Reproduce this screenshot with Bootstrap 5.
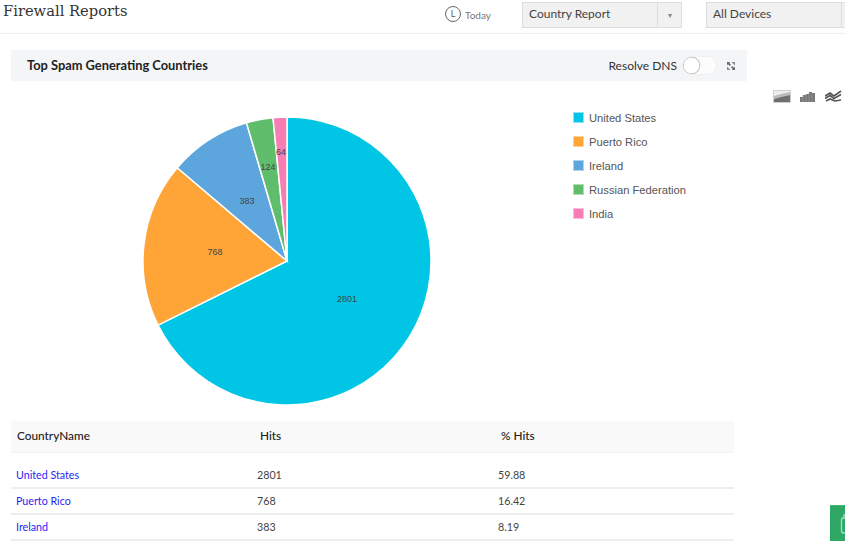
<!DOCTYPE html>
<html lang="en">
<head>
<meta charset="utf-8">
<title>Firewall Reports</title>
<link href="https://cdn.jsdelivr.net/npm/bootstrap@5.3.0/dist/css/bootstrap.min.css" rel="stylesheet">
<style>
html,body{height:100%;overflow:hidden;background:#fff}
body{font-family:Lato,"Liberation Sans",sans-serif;color:#333;font-size:12px}
.top-bar{height:34px;border-bottom:1px solid #eee;width:845px;overflow:hidden}
.page-title{font-family:"DejaVu Serif",serif;font-size:14.7px;font-weight:400;color:#333;margin:0 0 0 3px;width:442px;line-height:22px;height:24px;flex:none}
.today-box{width:77px;flex:none;padding-top:6px;color:#777;font-size:10px}
.clock-ring{width:16px;height:16px;border:1px solid #666;border-radius:50%;font-size:9px;line-height:14px;text-align:center;color:#555}
.today-word{margin-left:4px;line-height:18px}
.drop-group{width:160px;height:26px;margin-top:2px;flex:none}
.drop-group .btn{background:#f1f1f1;border:1px solid #ddd;border-radius:0;font-size:12px;color:#444;padding:0 6px 2px;text-align:left;line-height:20px}
.drop-group .drop-caret{width:25px;flex:none;padding:0;text-align:center;font-size:8px;color:#888}
.gap-drop{margin-left:24px}
.report-col{width:736px;margin-left:11px;flex:none}
.panel-bar{height:31px;background:#f4f5f7;margin-top:16px;padding:0 12px 0 16px}
.panel-name{font-size:12.85px;font-weight:700;color:#222}
.dns-label{font-size:12px;color:#333;margin-right:5px}
.form-switch .dns-toggle{width:35px;height:19px;margin:0;background-color:#fcfcfc;border-color:#f0f0f0;background-image:radial-gradient(circle at 8.500px 8.500px,#fff 0 7.500px,#ccc 8px 8.700px,transparent 9.200px);box-shadow:none}
.dns-wrap{padding:0;min-height:0;margin:0 10px 0 0}
.chart-art{display:block;width:736px;height:340px}
.legend-text{font-family:"Liberation Sans",sans-serif;font-size:11.2px;fill:#555}
.slice-text{font-family:"Liberation Sans",sans-serif;font-size:9px;fill:#444;text-anchor:middle}
.hits-table{width:723px;table-layout:fixed;margin:0}
.hits-table th{background:#f9f9f9;font-size:11.8px;font-weight:500;color:#222;height:31px;padding:0 0 0 8px;vertical-align:middle;border-bottom:1px solid #f2f2f2}
.hits-table th:first-child{padding-left:6px}
.hits-table td{height:26px;padding:1px 0 0 5px;vertical-align:middle;font-size:10.7px;color:#444;border-bottom:2px solid #eee}
.hits-table tr.first-row td{height:36px;padding-top:11px}
.hits-table a{color:#2525f5;text-decoration:none}
.view-icons{gap:9px;margin:56px 0 0 26px}
.float-tab{position:fixed;left:830px;top:505px;width:15px;height:36px;background:#2fa866;border-top:1px solid #3cb877;overflow:hidden}
.float-tab svg{display:block}
</style>
</head>
<body>
<header class="top-bar d-flex align-items-start">
  <h1 class="page-title">Firewall Reports</h1>
  <div class="today-box d-flex align-items-start"><span class="clock-ring">L</span><span class="today-word">Today</span></div>
  <div class="btn-group drop-group"><button class="btn" type="button">Country Report</button><button class="btn drop-caret" type="button">▾</button></div>
  <div class="btn-group drop-group gap-drop"><button class="btn" type="button">All Devices</button><button class="btn drop-caret" type="button" aria-label="Open"></button></div>
</header>
<div class="d-flex">
  <main class="report-col">
    <div class="panel-bar d-flex align-items-center justify-content-between">
      <span class="panel-name">Top Spam Generating Countries</span>
      <div class="d-flex align-items-center">
        <span class="dns-label">Resolve DNS</span>
        <div class="form-check form-switch dns-wrap"><input class="form-check-input dns-toggle" type="checkbox" role="switch" aria-label="Resolve DNS"></div>
        <svg width="8" height="8" viewBox="0 0 8 8"><path d="M0 0h3.200L2.200 1 4 2.800 2.800 4 1 2.200 0 3.200zM8 8H4.800l1-1L4 5.200 5.200 4 7 5.800l1-1z" fill="#666"/><path d="M4.500 0H8v3.500zM0 4.500V8h3.500z" fill="#8a8a8a"/></svg>
      </div>
    </div>
    <svg class="chart-art" viewBox="0 0 736 340" role="img" aria-label="Pie chart of top spam generating countries">
      <g transform="translate(-11 -81)" stroke="#fff" stroke-width="1.5">
        <path d="M287 261V117A144 144 0 1 1 158.060 325.100Z" fill="#00c5e5"/>
        <path d="M287 261L158.060 325.100A144 144 0 0 1 177.270 167.750Z" fill="#ffa437"/>
        <path d="M287 261L177.270 167.750A144 144 0 0 1 246.460 122.820Z" fill="#5ca6dd"/>
        <path d="M287 261L246.460 122.820A144 144 0 0 1 273.030 117.680Z" fill="#5fbd6c"/>
        <path d="M287 261L273.030 117.680A144 144 0 0 1 287 117Z" fill="#f77eb4"/>
      </g>
      <g transform="translate(-11 -81)">
        <text class="slice-text" x="347" y="302">2801</text>
        <text class="slice-text" x="215" y="255">768</text>
        <text class="slice-text" x="247" y="204">383</text>
        <text class="slice-text" x="268" y="170">124</text>
        <text class="slice-text" x="281" y="155">64</text>
        <rect x="573.500" y="112.500" width="10" height="10" fill="#00c5e5" stroke="#8fe3f2"/><text class="legend-text" x="589" y="122">United States</text>
        <rect x="573.500" y="136.500" width="10" height="10" fill="#ffa437" stroke="#ffd29b"/><text class="legend-text" x="589" y="146">Puerto Rico</text>
        <rect x="573.500" y="160.500" width="10" height="10" fill="#5ca6dd" stroke="#add2ee"/><text class="legend-text" x="589" y="170">Ireland</text>
        <rect x="573.500" y="184.500" width="10" height="10" fill="#5fbd6c" stroke="#afdeb5"/><text class="legend-text" x="589" y="194">Russian Federation</text>
        <rect x="573.500" y="208.500" width="10" height="10" fill="#f77eb4" stroke="#fbbed9"/><text class="legend-text" x="589" y="218">India</text>
      </g>
    </svg>
    <table class="table hits-table">
      <thead><tr><th>CountryName</th><th>Hits</th><th>% Hits</th></tr></thead>
      <tbody>
        <tr class="first-row"><td><a href="#">United States</a></td><td>2801</td><td>59.88</td></tr>
        <tr><td><a href="#">Puerto Rico</a></td><td>768</td><td>16.42</td></tr>
        <tr><td><a href="#">Ireland</a></td><td>383</td><td>8.19</td></tr>
      </tbody>
    </table>
  </main>
  <aside class="view-icons d-flex align-items-start">
    <svg width="18" height="13" viewBox="0 0 18 13"><rect width="18" height="13" fill="#cfcfcf"/><rect x="1" y="1" width="16" height="11" fill="#eee"/><path d="M1 6l7-2 9-2v3L8 7 1 9z" fill="#bbb"/><path d="M1 9l7-2 9-2v7H1z" fill="#6f6f6f"/></svg>
    <svg width="16" height="13" viewBox="0 0 16 13"><path d="M0 7h3v5H0zM3 5h3v7H3zM6 4h3v8H6zM9 2h3v10H9zM12 3h3v9h-3z" fill="#777"/><path d="M3 5v7M6 4v8M9 2v10M12 3v9" stroke="#aaa" stroke-width=".5"/></svg>
    <svg width="17" height="13" viewBox="0 0 17 13" fill="none" stroke="#555" stroke-width="1.600"><path d="M0 6l5-3 4 3 7-5M0 8.500l5-3 4 3 7-4M1 11l4-2 5 2 6-1"/></svg>
  </aside>
</div>
<div class="float-tab"><svg width="15" height="36" viewBox="0 0 15 36" fill="none" stroke="#a6dcbd" stroke-width="1.300"><rect x="11.500" y="12" width="9" height="15" rx="2"/><path d="M14 12V9h3"/></svg></div>
</body>
</html>
